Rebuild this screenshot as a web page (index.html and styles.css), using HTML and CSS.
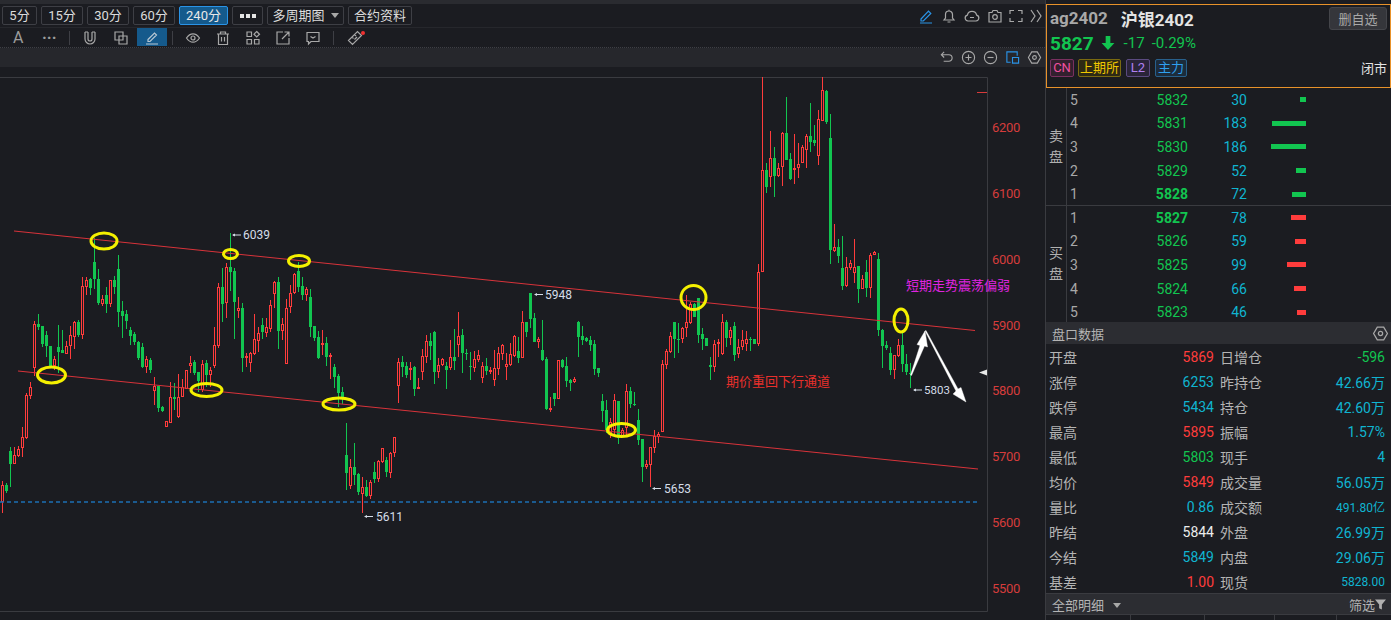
FILE: index.html
```html
<!DOCTYPE html>
<html lang="zh-CN">
<head>
<meta charset="utf-8">
<title>沪银2402</title>
<link rel="stylesheet" href="styles.css">
</head>
<body>
<div class="app">
  <main class="left">
    <div class="top-strip"></div>
    <div class="period-bar">
      <button class="btn w35">5分</button>
      <button class="btn w42">15分</button>
      <button class="btn w42">30分</button>
      <button class="btn w42">60分</button>
      <button class="btn w49 active">240分</button>
      <button class="btn w31 dots"><i></i><i></i><i></i></button>
      <button class="btn w77">多周期图<span class="caret"></span></button>
      <button class="btn w64">合约资料</button>
      <div class="right-icons">
        <svg class="ic" viewBox="0 0 16 16"><path class="blue" d="M3 11 10.5 3.2l2.3 2.2L5.3 13H3zM2 15h12"/></svg>
        <svg class="ic" viewBox="0 0 16 16"><path d="M3 12h10l-1.5-2V6.5a3.5 3.5 0 0 0-7 0V10zM6.5 14h3M8 3V1.8"/></svg>
        <svg class="ic" viewBox="0 0 16 16"><path d="M4 13a3 3 0 0 1-.6-5.9 4.7 4.7 0 0 1 9.2 0A3 3 0 0 1 12 13zM6 9.5h4"/></svg>
        <svg class="ic" viewBox="0 0 16 16"><path d="M2 4.5h3l1-2h4l1 2h3V14H2z"/><circle cx="8" cy="9" r="2.3"/></svg>
        <svg class="ic tight2" viewBox="0 0 16 16"><path d="M2 6V2.5h4M10 2.5h4V6M14 10v3.5h-4M6 13.5H2V10"/></svg>
        <svg class="ic tight3" viewBox="0 0 16 16"><path d="M3 2l4 6-4 6M9 2l4 6-4 6"/></svg>
      </div>
    </div>
    <div class="tool-bar">
      <span class="tool t-a">A</span>
      <span class="tool t-more">···</span>
      <span class="sep s1"></span>
      <svg class="ic tool-ic i1" viewBox="0 0 16 16"><path d="M3 2v7a5 5 0 0 0 10 0V2M6 2v7a2 2 0 0 0 4 0V2M3 2h3M10 2h3"/></svg>
      <svg class="ic tool-ic i2" viewBox="0 0 16 16"><path d="M2 2h8v8H2zM6 6h8v8H6z"/></svg>
      <span class="tool-active"><svg class="ic" viewBox="0 0 16 16"><path d="M4 10.5 10.5 4l2 2L6 12.5H4zM2 15h12"/></svg></span>
      <span class="sep s2"></span>
      <svg class="ic tool-ic i3" viewBox="0 0 16 16"><path d="M1.5 8C3.5 5 5.5 3.8 8 3.8S12.5 5 14.5 8c-2 3-4 4.200-6.500 4.200S3.500 11 1.500 8z"/><circle cx="8" cy="8" r="2"/></svg>
      <svg class="ic tool-ic i4" viewBox="0 0 16 16"><path d="M2 4h12M5.500 4V2h5v2M3.500 4v10.500h9V4M6.500 7v4.500M9.500 7v4.500"/></svg>
      <svg class="ic tool-ic i5" viewBox="0 0 16 16"><path d="M2 2h4.500v4.500H2zM2 9.500h4.500V14H2zM9.500 9.500H14V14H9.500zM11.700 1.500 14.500 4.200l-2.800 2.800L9 4.200z"/></svg>
      <svg class="ic tool-ic i6" viewBox="0 0 16 16"><path d="M8 2H2v12h12V8M7 9l7-7M9.500 2H14v4.500"/></svg>
      <svg class="ic tool-ic i7" viewBox="0 0 16 16"><path d="M2 2.500h12v9H6l-2.500 2.500v-2.500H2zM5.500 6.500 8 8l2.500-1.500"/></svg>
      <span class="sep s3"></span>
      <svg class="ic tool-ic i8" viewBox="0 0 16 16"><path d="M1.500 10.500 10.500 1.500l4 4-9 9zM5 7l1.500 1.500M7.500 4.500 9 6M10 7l-2.500 2.500"/></svg>
      <span class="red-dot"></span>
    </div>
    <div class="zoom-bar">
      <svg class="ic" viewBox="0 0 16 16"><path d="M3 5h7.500a3.500 3.500 0 0 1 0 7H5M5.500 2 2.500 5l3 3"/></svg>
      <svg class="ic" viewBox="0 0 16 16"><circle cx="8" cy="8" r="6.500"/><path d="M4.800 8h6.400M8 4.800v6.400"/></svg>
      <svg class="ic" viewBox="0 0 16 16"><circle cx="8" cy="8" r="6.500"/><path d="M4.800 8h6.400"/></svg>
      <svg class="ic" viewBox="0 0 16 16"><path class="blue" d="M13 6V2H2v11h4M8 8h6.500v6H8z"/></svg>
      <svg class="ic" viewBox="0 0 16 16"><path d="M5 2h6l3.500 6-3.500 6H5L1.500 8z"/><circle cx="8" cy="8" r="2"/></svg>
    </div>
    <div class="gap-strip"></div>
    <svg class="chart" viewBox="0 77 1045 543" width="1045" height="543">
      <path class="frame" d="M0 77.500H987.500V611.500H0"/>
      <path class="tick" d="M977 92.500h10"/>
      <g id="candles"></g>
      <path class="dash" d="M0 502H978"/>
      <path class="channel" d="M14 231 975 330.500M18 371 978 469"/>
      <g class="rings">
        <ellipse cx="104" cy="241" rx="13" ry="8"/>
        <ellipse cx="51.500" cy="375" rx="14" ry="8"/>
        <ellipse cx="230.500" cy="254" rx="7" ry="4.500"/>
        <ellipse cx="299" cy="261" rx="10.500" ry="5.500"/>
        <ellipse cx="206.500" cy="390" rx="15.500" ry="6.500"/>
        <ellipse cx="339" cy="404" rx="16" ry="6"/>
        <ellipse cx="621.500" cy="430" rx="14" ry="6.500"/>
        <ellipse cx="693.500" cy="297.500" rx="12.500" ry="12"/>
        <ellipse cx="901" cy="320.500" rx="7" ry="11.500"/>
      </g>
      <path class="arrow" d="M910.500 375 920 345.500 917 344.500 925 331 927.500 347 924.500 346 911.500 375.500z"/>
      <path class="arrow" d="M925 331 926 330.500 958 389 961 387.500 966 402 953 394 956 391z"/>
      <path class="ptr" d="M233 235h8M914 390h8M535 294.500h8M365 516.500h8M653 488.500h8"/>
      <path class="ptr-head" d="M232 235l3-1.500v3zM913 390l3-1.500v3zM534 294.500l3-1.500v3zM364 516.500l3-1.500v3zM652 488.500l3-1.500v3z"/>
      <g class="hl">
        <text x="243" y="239">6039</text>
        <text x="545" y="299">5948</text>
        <text x="376" y="521">5611</text>
        <text x="664" y="493">5653</text>
        <text class="hl-small" x="924" y="394">5803</text>
      </g>
      <text class="note red" x="726" y="386">期价重回下行通道</text>
      <text class="note pink" x="906" y="290">短期走势震荡偏弱</text>
      <g class="axis">
        <text x="992" y="132">6200</text>
        <text x="992" y="198">6100</text>
        <text x="992" y="264">6000</text>
        <text x="992" y="330">5900</text>
        <text x="992" y="395">5800</text>
        <text x="992" y="461">5700</text>
        <text x="992" y="527">5600</text>
        <text x="992" y="593">5500</text>
      </g>
      <path class="marker" d="M979 372.500 987 369.500V375.500z"/>
    </svg>
  </main>

  <aside class="right">
    <section class="quote">
      <div class="q1">
        <span class="code">ag2402</span><span class="name">沪银2402</span>
        <button class="del">删自选</button>
      </div>
      <div class="q2">
        <span class="last">5827</span>
        <svg class="down" viewBox="0 0 12 12"><path d="M4 0h4v6h3.500L6 12 .5 6H4z"/></svg>
        <span class="chg">-17</span><span class="chg">-0.29%</span>
      </div>
      <div class="q3">
        <span class="tag t-cn">CN</span>
        <span class="tag t-ex">上期所</span>
        <span class="tag t-l2">L2</span>
        <span class="tag t-main">主力</span>
        <span class="closed">闭市</span>
      </div>
    </section>

    <section class="book sell">
      <div class="side"><span>卖</span><span>盘</span></div>
      <div class="rows">
        <div class="row"><span class="idx">5</span><span class="price">5832</span><span class="vol">30</span><span class="bar-cell"><i class="bar g w6"></i></span></div>
        <div class="row"><span class="idx">4</span><span class="price">5831</span><span class="vol">183</span><span class="bar-cell"><i class="bar g w34"></i></span></div>
        <div class="row"><span class="idx">3</span><span class="price">5830</span><span class="vol">186</span><span class="bar-cell"><i class="bar g w35"></i></span></div>
        <div class="row"><span class="idx">2</span><span class="price">5829</span><span class="vol">52</span><span class="bar-cell"><i class="bar g w10"></i></span></div>
        <div class="row"><span class="idx">1</span><span class="price strong">5828</span><span class="vol">72</span><span class="bar-cell"><i class="bar g w14"></i></span></div>
      </div>
    </section>
    <section class="book buy">
      <div class="side"><span>买</span><span>盘</span></div>
      <div class="rows">
        <div class="row"><span class="idx">1</span><span class="price strong">5827</span><span class="vol">78</span><span class="bar-cell"><i class="bar r w15"></i></span></div>
        <div class="row"><span class="idx">2</span><span class="price">5826</span><span class="vol">59</span><span class="bar-cell"><i class="bar r w11"></i></span></div>
        <div class="row"><span class="idx">3</span><span class="price">5825</span><span class="vol">99</span><span class="bar-cell"><i class="bar r w19"></i></span></div>
        <div class="row"><span class="idx">4</span><span class="price">5824</span><span class="vol">66</span><span class="bar-cell"><i class="bar r w12"></i></span></div>
        <div class="row"><span class="idx">5</span><span class="price">5823</span><span class="vol">46</span><span class="bar-cell"><i class="bar r w9"></i></span></div>
      </div>
    </section>

    <header class="panel-head">
      <span>盘口数据</span>
      <svg class="ic hex" viewBox="0 0 16 16"><path d="M5 2h6l3.500 6-3.500 6H5L1.500 8z"/><circle cx="8" cy="8" r="2"/></svg>
    </header>
    <section class="stats">
      <div class="stat"><span>开盘</span><b class="up">5869</b><span class="l2">日增仓</span><b class="dn">-596</b></div>
      <div class="stat"><span>涨停</span><b class="cy">6253</b><span class="l2">昨持仓</span><b class="cy">42.66万</b></div>
      <div class="stat"><span>跌停</span><b class="cy">5434</b><span class="l2">持仓</span><b class="cy">42.60万</b></div>
      <div class="stat"><span>最高</span><b class="up">5895</b><span class="l2">振幅</span><b class="cy">1.57%</b></div>
      <div class="stat"><span>最低</span><b class="dn">5803</b><span class="l2">现手</span><b class="cy">4</b></div>
      <div class="stat"><span>均价</span><b class="up">5849</b><span class="l2">成交量</span><b class="cy">56.05万</b></div>
      <div class="stat"><span>量比</span><b class="cy">0.86</b><span class="l2">成交额</span><b class="cy small">491.80亿</b></div>
      <div class="stat"><span>昨结</span><b class="wh">5844</b><span class="l2">外盘</span><b class="cy">26.99万</b></div>
      <div class="stat"><span>今结</span><b class="cy">5849</b><span class="l2">内盘</span><b class="cy">29.06万</b></div>
      <div class="stat"><span>基差</span><b class="up">1.00</b><span class="l2">现货</span><b class="cy small">5828.00</b></div>
    </section>
    <footer class="panel-foot">
      <span>全部明细<span class="caret foot-caret"></span></span>
      <span class="filter">筛选<svg viewBox="0 0 12 12"><path d="M0 1h12L7.500 6.500V12l-3-1.500v-4z"/></svg></span>
    </footer>
    <div class="detail-head"><i class="c1"></i><i class="c2"></i><i class="c3"></i><i class="c4"></i></div>
  </aside>
</div>
<script src="chart.js"></script>
</body>
</html>
```
FILE: styles.css
```css
* { box-sizing: border-box; }
html, body { margin: 0; height: 100%; overflow: hidden; }
body {
  background: #1b1c21;
  color: #b4b4b4;
  font: 14px Roboto, "Noto Sans CJK SC", sans-serif;
}
button { font: inherit; color: inherit; margin: 0; }
.app { display: flex; width: 1391px; height: 620px; }
.left { width: 1045px; display: flex; flex-direction: column; position: relative; }
.right { width: 346px; display: flex; flex-direction: column; border-left: 1px solid #3a3b40; }

.ic { width: 16px; height: 16px; fill: none; stroke: #a8a8a8; stroke-width: 1.200; flex: none; }
.ic .blue { stroke: #2a93e6; }

.top-strip { height: 4px; background: #2a2b30; }
.period-bar { height: 24px; display: flex; align-items: center; gap: 4px; padding: 2px 0 2px 2px; border-bottom: 1px solid #26272c; }
.btn { height: 19px; padding: 0; background: #1b1c21; border: 1px solid #3e3f45; border-radius: 2px; color: #dcdcdc; font-size: 13px; line-height: 16px; display: flex; align-items: center; justify-content: center; }
.w35 { width: 35px; } .w42 { width: 42px; } .w49 { width: 49px; } .w31 { width: 31px; } .w77 { width: 77px; } .w64 { width: 64px; }
.btn.active { background: #155a8c; border-color: #2a93e6; color: #e8e8e8; }
.dots { gap: 2px; }
.dots i { width: 4px; height: 4px; background: #e4e4e4; display: block; }
.caret { display: inline-block; width: 0; height: 0; border: 4px solid transparent; border-top: 5px solid #a8a8a8; border-bottom: 0; margin-left: 6px; }
.foot-caret { margin-left: 9px; vertical-align: 2px; }
.right-icons { margin-left: auto; display: flex; gap: 7px; padding-right: 1px; }
.right-icons .tight2 { margin-left: -2px; }
.right-icons .tight3 { margin-left: -3px; }

.tool-bar { height: 20px; position: relative; border-bottom: 1px dotted #3e3f45; }
.tool, .tool-ic, .sep, .tool-active, .red-dot { position: absolute; }
.tool { top: 0; color: #9c9c9c; line-height: 19px; }
.t-a { left: 13px; font-size: 16px; }
.t-more { left: 42px; font-size: 16px; font-weight: 700; }
.sep { top: 3px; width: 1px; height: 14px; background: #3e3f45; }
.s1 { left: 69px; } .s2 { left: 172px; } .s3 { left: 333px; }
.tool-ic { top: 2px; }
.i1 { left: 82px; } .i2 { left: 113px; } .i3 { left: 185px; } .i4 { left: 215px; } .i5 { left: 245px; } .i6 { left: 275px; } .i7 { left: 305px; } .i8 { left: 347px; }
.tool-active { left: 137px; top: 0; width: 30px; height: 18px; background: #155a8c; display: flex; align-items: center; justify-content: center; }
.tool-active .ic { stroke: #b8c8d4; }
.red-dot { left: 361px; top: 3px; width: 4px; height: 4px; background: #f03030; border-radius: 50%; }

.zoom-bar { height: 19px; background: #26272c; display: flex; justify-content: flex-end; align-items: center; gap: 7px; padding-right: 3px; }
.zoom-bar .ic { width: 15px; height: 15px; }
.gap-strip { height: 10px; }

.chart { display: block; }
.frame { fill: none; stroke: #3a3b40; }
.tick { stroke: #d83a3a; }
.c-r { fill: #1b1c21; stroke: #ff3c3c; stroke-width: 1; }
.w-r { stroke: #ff3c3c; stroke-width: 1; fill: none; }
.c-g { fill: #12c550; }
.w-g { stroke: #12c550; stroke-width: 1; fill: none; }
.dash { stroke: #1c6fb4; stroke-width: 1.400; stroke-dasharray: 4 3; }
.channel { stroke: #d8333a; stroke-width: 1; fill: none; }
.rings ellipse { fill: none; stroke: #f4f000; stroke-width: 3; }
.arrow { fill: #fff; stroke: #fff; stroke-width: .4; }
.ptr { stroke: #d5dde8; stroke-width: 1; fill: none; }
.ptr-head { fill: #d5dde8; }
.hl text { fill: #d5dde8; font-size: 12px; }
.hl .hl-small { font-size: 11.500px; }
.note { font-size: 13px; font-family: "Noto Sans CJK SC", sans-serif; }
.note.red { fill: #e8302c; }
.note.pink { fill: #e024e0; }
.axis text { fill: #d63c3c; font-size: 13px; letter-spacing: -.3px; }
.marker { fill: #e8e8e8; }

.quote { height: 84px; margin-top: 4px; border: 1px solid #e8922a; padding: 0 3px; display: flex; flex-direction: column; flex: none; }
.q1 { height: 26px; display: flex; align-items: center; font-size: 17px; font-weight: 700; color: #e4e4e4; position: relative; }
.code { color: #a8a8a8; margin-right: 13px; }
.del { position: absolute; right: 0; top: 2px; width: 58px; height: 23px; background: #35363b; border: 1px solid #44454a; border-radius: 3px; color: #a8a8a8; font-size: 13px; font-weight: 400; }
.q2 { height: 24px; display: flex; align-items: center; color: #12c550; }
.last { font-size: 19px; font-weight: 700; margin-right: 7px; }
.down { width: 14px; height: 14px; fill: #12c550; margin-right: 9px; }
.chg { font-size: 15px; margin-right: 7px; }
.q3 { height: 24px; display: flex; align-items: center; position: relative; padding-top: 2px; }
.tag { height: 18px; font-size: 13px; line-height: 16px; border: 1px solid; border-radius: 2px; text-align: center; }
.t-cn { width: 24px; color: #f050a0; border-color: #7a3060; background: #33202e; }
.t-ex { width: 43px; margin-left: 4px; color: #f0c800; border-color: #7a6a10; background: #2e2a14; }
.t-l2 { width: 24px; margin-left: 5px; color: #b080f0; border-color: #5a4a80; background: #2a2438; }
.t-main { width: 32px; margin-left: 5px; color: #2fa0f0; border-color: #28608c; background: #1c2c3c; }
.closed { position: absolute; right: 0; color: #e4e4e4; font-size: 13px; top: 3px; }

.book { display: flex; flex: none; }
.book.sell { height: 118px; border-bottom: 1px solid #3a3b40; }
.book.buy { height: 116px; }
.side { width: 21px; border-right: 1px solid #3a3b40; display: flex; flex-direction: column; align-items: center; justify-content: center; color: #b0b0b0; line-height: 21px; }
.rows { flex: 1; }
.row { height: 23.600px; display: grid; grid-template-columns: 20px 98px 59px 59px; align-items: center; padding-left: 3px; }
.idx { color: #a8a8a8; }
.price { color: #12c550; text-align: right; }
.price.strong { font-weight: 700; }
.vol { color: #10b4d0; text-align: right; }
.bar-cell { display: flex; justify-content: flex-end; }
.bar { display: block; height: 5px; }
.bar.g { background: #12c550; } .bar.r { background: #ff3c3c; }
.w6 { width: 6px; } .w34 { width: 34px; } .bar.w35 { width: 35px; } .w10 { width: 10px; } .w14 { width: 14px; } .w15 { width: 15px; } .w11 { width: 11px; } .w19 { width: 19px; } .w12 { width: 12px; } .w9 { width: 9px; }

.panel-head { height: 22px; flex: none; background: #2c2d32; display: flex; align-items: center; justify-content: space-between; padding: 0 2px 0 6px; font-size: 13px; }
.hex { width: 17px; height: 17px; }
.stats { height: 249px; flex: none; }
.stat { height: 25px; display: grid; grid-template-columns: 40px 125px 48px 123px; align-items: center; padding-left: 3px; }
.stat b { font-weight: 400; text-align: right; }
.stat .l2 { margin-left: 6px; white-space: nowrap; }
.up { color: #ff3c3c; } .dn { color: #12c550; } .cy { color: #10b4d0; } .wh { color: #ececec; }
.stat .small { font-size: 12px; }
.panel-foot { height: 22px; flex: none; background: #2c2d32; display: flex; align-items: center; justify-content: space-between; padding: 0 5px 0 6px; font-size: 13px; border-top: 1px solid #3a3b40; border-bottom: 1px solid #3a3b40; }
.filter { display: flex; align-items: center; }
.filter svg { width: 11px; height: 12px; fill: #b0b0b0; }
.detail-head { flex: 1; display: grid; grid-template-columns: 85px 74px 70px 62px 1fr; }
.detail-head i { border-right: 1px solid #3a3b40; }
```
FILE: chart.js
```js
// Candles traced from the reference: colour, x, high, body top, body bottom, low (3x crop coordinates)
var SEGMENTS = [
  { ox: 0, oy: 220, d: "r7 783 795 845 880;g19 790 795 813 818;g31 682 693 731 800;r43 680 705 731 733;r55 678 688 708 712;r67 622 652 685 710;r79 518 525 654 658;r91 487 502 527 537;r103 304 313 445 467;g115 282 312 321 330;g127 318 318 372 382;g139 332 345 378 410;g151 378 378 438 445;r163 407 418 437 450;g175 316 381 396 458;g187 330 390 399 400;r199 362 379 401 403;r211 318 346 378 416;r223 303 306 350 387;g235 300 306 346 350;r247 170 198 345 356;r259 172 180 200 225;g271 175 178 203 225;g283 55 126 178 207;g295 148 178 248 255;r307 225 238 252 258;g319 200 225 252 278;r331 180 181 252 262;g343 168 180 200 222;g355 105 148 276 320;g367 242 274 288 354;g379 270 282 303 326;g391 320 331 348 376;g403 336 342 365 375;g415 362 366 413 420;g427 370 381 441 444;r439 408 418 440 458;g451 414 420 450 458;r463 472 498 512 555;g475 498 498 563 575;g487 558 561 573 576;r499 602 603 620 620;r511 487 532 608 608;g523 490 532 538 570;r535 462 532 591 593;r547 476 502 530 530;r559 450 450 506 506;r571 408 428 437 460;g583 420 427 458 465;g595 456 457 484 515;r607 420 432 510 515;g619 420 430 465 500;r631 440 451 465 500;r643 322 376 437 445;r655 190 202 378 385;g667 145 202 252 305;r679 130 142 250 293;g691 40 141 156 212;g703 145 153 246 356;r715 230 265 272 293;g727 250 264 413 455;r739 400 408 412 440;r751 395 400 428 455;r763 282 358 402 405;r775 322 340 362 395;g787 295 316 336 358;r799 295 322 338 350;r811 240 255 326 335;r823 182 186 221 265;g835 172 186 333 387;r847 295 313 332 360;r859 238 265 431 431;r871 195 220 262 280;r883 160 162 218 222;g895 125 153 200 215;g907 170 198 225 240;r919 200 208 224 242;g931 208 232 320 350;g943 318 318 353 362;g955 334 351 414 416;r967 330 368 371 405;g979 352 369 412 437;r991 400 404 406 478;g1003 433 442 471 505;g1015 462 468 520 562;g1027 500 517 535 552" },
  { ox: 340, oy: 280, d: "g19 430 525 580 630;r31 537 562 617 627;g43 490 560 585 615;g55 578 582 637 645;r67 590 622 643 700;g79 600 622 648 652;r91 600 606 648 657;g103 545 576 597 610;r115 540 543 597 605;r127 505 505 545 548;g139 530 540 576 590;r151 515 520 578 593;r163 472 472 520 530;r175 235 247 317 368;g187 228 247 260 290;g199 246 258 285 295;r211 245 263 266 300;g223 258 262 327 347;r235 295 320 325 326;r247 208 229 275 300;r259 165 182 230 250;g271 160 183 197 240;g283 153 156 275 312;r295 235 256 275 295;r307 235 238 255 258;g319 245 259 269 327;r331 180 232 265 270;g343 148 232 242 270;r355 97 168 194 230;g367 148 165 218 278;g379 208 220 222 240;g391 215 257 260 300;r403 212 238 263 275;r415 210 226 240 245;r427 245 259 293 308;g439 235 258 273 285;r451 262 270 273 282;r463 210 265 299 317;r475 200 219 267 285;r487 192 196 221 240;r499 220 253 260 300;r511 190 223 255 258;r523 165 168 227 230;g535 172 213 234 250;r547 93 127 233 233;g559 125 126 155 172;g571 40 40 117 145;g583 100 114 185 186;r595 170 177 186 203;g607 120 210 240 243;g619 232 238 386 390;r631 350 383 388 395;g643 338 340 356 378;r655 240 241 358 358;g667 238 240 262 265;g679 232 258 302 322;g691 298 300 309 332;r703 292 298 307 308;g715 122 126 170 232;g727 138 168 180 195;g739 170 175 183 186;g751 168 180 196 212;g763 180 192 267 285;g775 264 265 279 291;g787 342 363 393 425;g799 360 390 450 460;r811 415 425 465 475;r823 342 361 450 470;g835 363 363 475 492;r847 445 450 467 470;r859 312 333 445 465;g871 322 334 373 385;g883 335 373 374 378;g895 388 420 480 495;g907 478 478 560 605;r919 540 553 562 567;r931 500 502 556 620;r943 450 468 503 520;r955 455 462 472 488;r967 240 253 455 455;r979 208 213 255 268;r991 155 168 215 218;g1003 125 125 178 233;g1015 130 178 180 218;r1027 140 145 178 188" },
  { ox: 640, oy: 75, d: "r139 660 742 758 785;r151 680 688 744 748;g163 683 688 725 725;g175 668 668 780 805;g187 760 778 792 825;g199 788 790 812 812;g211 846 870 876 915;r223 795 806 876 890;r235 793 800 806 845;r247 717 742 838 840;g259 735 742 788 815;r271 757 765 788 810;g283 742 754 840 858;r295 792 816 836 848;r307 765 795 816 825;r319 767 792 806 828;g331 785 792 795 828;g343 792 793 806 806;r355 568 592 808 812;r367 7 286 592 592;g379 265 286 335 353;r391 168 250 305 335;g403 215 250 302 365;r415 265 280 302 305;r427 172 174 275 332;g439 66 174 255 255;g451 235 252 312 315;r463 178 278 285 328;r475 205 266 278 310;r487 210 216 265 265;r499 178 184 226 278;g511 84 184 201 232;g523 150 195 204 212;r535 105 133 242 270;r547 7 46 137 137;g559 46 48 142 148;g571 118 190 525 567;r583 447 515 527 530;g595 492 517 543 565;g607 482 578 633 645;r619 547 575 633 635;r631 555 565 580 585;r643 492 575 593 625;g655 573 574 641 683;r667 600 612 641 641;g679 556 591 638 665;r691 535 540 638 670;r703 528 530 541 541;g715 535 552 765 782;g727 762 765 812 878;g739 798 810 820 825;g751 815 835 885 900;r763 840 841 885 912;r775 792 811 843 845;g787 772 810 868 892;g799 838 868 892 900;g811 865 893 896 938" }
];

(function () {
  var NS = "http://www.w3.org/2000/svg";
  var host = document.getElementById("candles");

  function add(tag, cls, attrs) {
    var el = document.createElementNS(NS, tag);
    el.setAttribute("class", cls);
    for (var k in attrs) el.setAttribute(k, attrs[k]);
    host.appendChild(el);
  }

  SEGMENTS.forEach(function (seg) {
    seg.d.split(";").forEach(function (item) {
      var kind = item.charAt(0);
      var n = item.slice(1).split(" ").map(Number);
      var col = Math.floor(seg.ox + n[0] / 3);
      var py = function (v) { return Math.round(seg.oy + v / 3); };
      var hi = py(n[1]), top = py(n[2]), bot = py(n[3]), lo = py(n[4]);
      var cx = col + 0.5;
      add("path", "w-" + kind, { d: "M" + cx + " " + hi + "V" + top + "M" + cx + " " + bot + "V" + lo });
      if (kind === "r") {
        add("rect", "c-r", { x: col - 0.5, y: top + 0.5, width: 2, height: Math.max(bot - top - 1, 1) });
      } else {
        add("rect", "c-g", { x: col - 1, y: top, width: 3, height: Math.max(bot - top, 1) });
      }
    });
  });
})();
```
